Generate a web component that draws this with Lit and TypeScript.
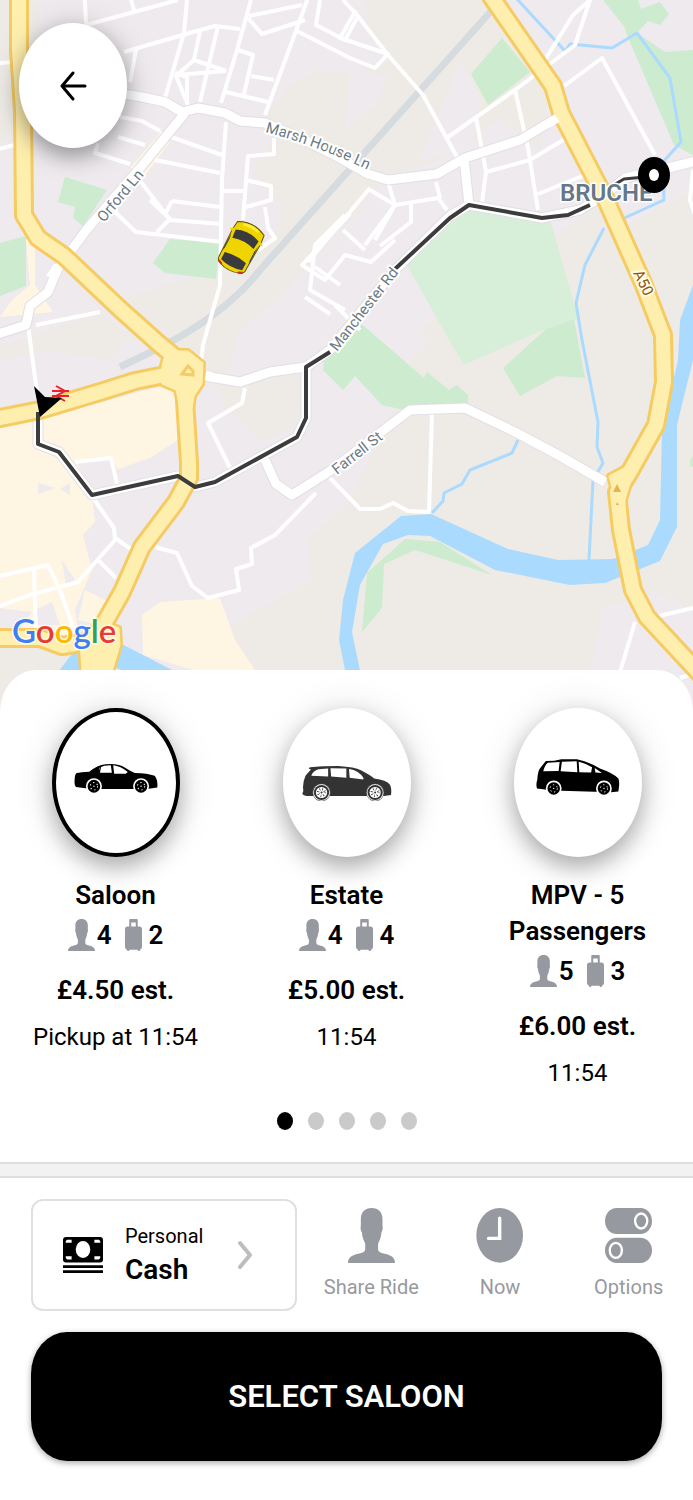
import { LitElement, html, svg, css } from "lit";
import { customElement, property, state } from "lit/decorators.js";
import { classMap } from "lit/directives/class-map.js";

type Vehicle = {
  id: string;
  name: string;
  seats: number;
  bags: number;
  price: string;
  eta: string;
};

const VEHICLES: Vehicle[] = [
  { id: "saloon", name: "Saloon", seats: 4, bags: 2, price: "£4.50 est.", eta: "Pickup at 11:54" },
  { id: "estate", name: "Estate", seats: 4, bags: 4, price: "£5.00 est.", eta: "11:54" },
  { id: "mpv", name: "MPV - 5 Passengers", seats: 5, bags: 3, price: "£6.00 est.", eta: "11:54" },
];

const wheel = (x: number, y: number) => svg`
  <circle cx=${x} cy=${y} r="24" fill="#fff"></circle>
  <circle cx=${x} cy=${y} r="19" fill="currentColor"></circle>
  <circle cx=${x} cy=${y} r="11" fill="none" stroke="#fff" stroke-width="3" stroke-dasharray="4 8"></circle>
  <circle cx=${x} cy=${y} r="2" fill="#fff"></circle>`;

const alloy = (x: number, y: number) => svg`
  <circle cx=${x} cy=${y} r="27" fill="#777"></circle>
  <circle cx=${x} cy=${y} r="25" fill="#fff"></circle>
  <circle cx=${x} cy=${y} r="23" fill="currentColor"></circle>
  <circle cx=${x} cy=${y} r="17" fill="#fff"></circle>
  <circle cx=${x} cy=${y} r="10" fill="none" stroke="currentColor" stroke-width="8" stroke-dasharray="2 6"></circle>
  <circle cx=${x} cy=${y} r="3" fill="currentColor"></circle>`;

const CARS: Record<string, unknown> = {
  saloon: html`<svg class="car saloon" viewBox="130 222 253 92" preserveAspectRatio="none" aria-hidden="true">
    <path fill="currentColor" d="M138 252Q150 249 176 248Q200 229 225 226Q262 222 284 236Q300 246 313 252Q352 253 373 260Q383 272 381 295L350 299H212L165 297L136 293Q130 288 132 272Q132 256 138 252Z"></path>
    <path fill="#fff" d="M206 236Q220 229 241 229L244 251H207Q203 244 206 236ZM248 229Q270 231 292 249L286 254H251Z"></path>
    <path fill="currentColor" d="M208 232h4l-4 20h-4z"></path>
    ${wheel(190, 291)}${wheel(332, 291)}
  </svg>`,
  estate: html`<svg class="car estate" viewBox="0 222 272 110" preserveAspectRatio="none" aria-hidden="true">
    <path fill="currentColor" d="M24 229Q60 225 110 225Q160 228 178 238Q205 252 218 263Q255 268 266 282Q272 295 269 314L248 317H22Q4 317 1 310Q6 302 3 290Q4 268 11 254L27 236L20 233Z"></path>
    <path fill="#fff" d="M28 255Q33 240 50 235L79 233V257ZM86 232L134 233V261L88 257ZM142 234Q172 238 186 262L185 266L144 261Z"></path>
    ${alloy(59, 306)}${alloy(221, 306)}
  </svg>`,
  mpv: html`<svg class="car mpv" viewBox="527 209 256 112" preserveAspectRatio="none" aria-hidden="true">
    <path fill="currentColor" d="M557 215L583 214L604 210H652Q690 218 722 238Q762 252 778 268Q783 280 778 307L755 310L605 305L560 302L530 298Q526 285 531 272Q532 245 540 236Z"></path>
    <path fill="#fff" d="M549 246Q554 226 563 220L599 218L596 245ZM606 217L651 216L653 249L602 246ZM657 217Q678 222 698 234L695 250L659 249ZM706 236L728 251L708 250Z"></path>
    ${wheel(581, 298)}${wheel(734, 298)}
  </svg>`,
};

const personIcon = html`<svg class="person" viewBox="0 0 139 161" preserveAspectRatio="none" aria-hidden="true">
  <path fill="currentColor" d="M70 0C50 0 38 13 38 32V52C36 58 38 68 41 71C42 86 47 95 51 105V120C51 130 40 132 26 135C9 140 0 147 0 161H139C139 147 130 140 113 135C99 132 89 130 89 120V105C93 95 98 86 99 71C102 68 104 58 102 52V32C102 13 90 0 70 0Z"></path>
</svg>`;

const bagIcon = html`<svg class="bag" viewBox="0 0 52 94" preserveAspectRatio="none" aria-hidden="true">
  <path fill="currentColor" fill-rule="evenodd" d="M16 0H36Q39 0 39 3V22H44Q52 22 52 30V82Q52 88 47 89V91Q45 94 42 94Q39 94 38 90H14Q13 94 10 94Q7 94 5 91V89Q0 88 0 82V30Q0 22 8 22H13V3Q13 0 16 0ZM19 10V22H33V10Z"></path>
</svg>`;

const clockIcon = html`<svg class="action-icon" viewBox="0 0 139 161" preserveAspectRatio="none" aria-hidden="true">
  <ellipse cx="70" cy="80" rx="69" ry="80" fill="currentColor"></ellipse>
  <path d="M70 30V89H37" fill="none" stroke="#fff" stroke-width="10" stroke-linecap="round"></path>
</svg>`;

const togglesIcon = html`<svg class="action-icon" viewBox="0 0 139 161" preserveAspectRatio="none" aria-hidden="true">
  <rect width="139" height="76" rx="34" ry="38" fill="currentColor"></rect>
  <rect y="87" width="139" height="74" rx="34" ry="37" fill="currentColor"></rect>
  <ellipse cx="107" cy="38" rx="18" ry="22" fill="none" stroke="#fff" stroke-width="7"></ellipse>
  <ellipse cx="32" cy="124" rx="18" ry="22" fill="none" stroke="#fff" stroke-width="7"></ellipse>
</svg>`;

const MAJOR = [
  "M19 -5L19 50L23 110L24 215L38 238L64 256L120 309L158 343L188 368",
  "M-5 419L40 410L100 392L135 381L190 370",
  "M187 371L185 400L189 463L189 478L176 502L142 547L122 592L105 622L98 650L96 690",
  "M-5 638L40 638L62 646L100 640",
  "M490 -5L553 86L561 113L606 200L643 283L663 335L664 382L656 425L628 475L617 492L621 530L633 590L647 617L700 674",
];

const MID = [
  "M110 92L142 97L165 102L182 112L198 108L225 113L240 121L265 123L300 138L340 158L368 174L388 180L437 174L465 158L520 140L557 118",
  "M185 113L140 168L88 228L58 268L48 292L30 306L26 325L-5 335",
  "M464 158L469 205L450 216L395 270L330 350L306 367L270 372L240 382L205 376",
  "M469 205L542 218L580 210L606 194L625 178L660 170L700 160",
  "M265 460L276 484L292 495L330 471L410 410L465 408L515 432L560 456L605 482",
  "M38 405V444L59 452L92 495L178 476L195 487L215 482L297 437L306 418V367",
];

const MINOR = [
  "M85 0L86 25L178 0M131 0L134 10M124 52L186 34L215 26L240 29M136 50L130 82M187 0L184 33L165 98M200 31L194 60L176 76L188 105M218 26L200 102M176 75L226 71",
  "M251 0L237 50L221 103M249 16L302 5M248 18L262 34L305 20M308 -2L265 115M238 50L253 55L244 94M226 92L268 102M251 76L274 80M295 30L350 58L375 68L388 54L340 38L356 10M320 0L316 25L345 40L357 18",
  "M194 60L226 71M175 73L187 77L187 104M120 117L142 121L160 131M118 137L145 145M98 143L95 153L130 164M160 133L222 155M155 160L220 173M138 178L170 220L222 224M150 200L170 219L157 232M172 201L220 207M172 201L165 214M115 212L136 232L222 242M226 122L222 180L220 285L203 345L199 378M222 191H243M274 138L274 154L248 156L243 220M246 180L271 186L271 200L246 207M265 207L268 228L275 238L258 250",
  "M36 325L100 312M28 325L38 400M-5 150L18 144M0 63L14 62",
  "M343 0L357 15L388 55L423 95L457 157M448 137L515 90L575 45L590 0L573 15L545 60M515 90L528 148L538 210M476 117L486 172L482 202M486 172L530 160L568 137M564 86L602 58L655 155M538 194L585 175M388 182L395 205L438 198L447 210M395 205L375 240M436 182L440 198",
  "M350 214L302 265L325 280L345 255L371 262L395 240M345 215L315 245L310 290L345 310M315 267L340 285M343 230L365 250M335 305L360 330M305 297L330 314M370 188L308 262M370 190L395 205L365 245M411 203V222L380 246",
  "M432 412L429 512L408 511L393 503L380 509L360 509L330 478M245 388L242 403L208 423L230 468M316 493L275 535L251 548L252 564L236 569L239 590L208 598L192 586L177 553L155 547",
  "M75 462L111 458L117 484M91 495L114 528L115 540L78 582L30 595L-5 608M115 538L135 552M99 561L116 578M-5 577L48 565L60 590L74 630M34 570L36 635M693 608L655 617M635 622L620 672M693 170L690 200L695 215M693 674L680 678",
];

const JUNCTIONS =
  "M162 366L166 351L181 351L188 351L203 363L202 384L194 396L192 408L180 408L176 390L162 384ZM609 476L633 463L631 480L625 500L624 524L617 505ZM80 640L100 620L119 628L120 645L112 672H82Z";

const mapArt = svg`
  <rect width="693" height="720" fill="#eeeaee"></rect>
  <g class="land">
    <path d="M0 0H40V62L28 70L20 130L0 140ZM365 0H492L550 86L540 150L500 120L440 160L385 178L350 220L305 270L260 320L215 390L190 362L130 340L110 300L205 275L270 245L283 205L252 172L272 140L265 115L290 85L318 70L352 72L388 62L368 30Z"></path>
    <path d="M0 345L45 332L100 312L128 336L110 360L40 350L0 362ZM220 385L300 372L297 425L262 442L222 405Z"></path>
    <path d="M425 325L570 225L600 205L650 290V720H140L215 635L310 580L308 540L350 500L395 405Z"></path>
    <path d="M600 240L693 190V610L650 590L600 605L585 672L560 700L400 680Z"></path>
    <path d="M0 670V650L90 640L150 680V720H0Z"></path>
  </g>
  <path class="urban" d="M350 70L388 75L375 105L345 130ZM460 60L480 100L470 150L420 160ZM240 330L290 290L330 320L310 360L230 365ZM400 330L430 340L410 360ZM602 608L650 596L693 615V720H583Z"></path>
  <g class="shop">
    <path d="M0 428L70 410L162 386L175 390L178 440L150 458L118 470L112 458L76 462L92 495L95 522L83 535L92 570L75 610L80 640H0ZM26 240H35V285L53 312L0 317L12 300L30 285ZM142 615L160 602L220 598L235 640L255 670L240 684L143 655Z"></path>
    <path d="M85 590L115 605L100 625L78 620ZM160 133L170 142L145 176L130 168Z"></path>
  </g>
  <path class="urban" d="M178 444V478L118 484L116 470L150 458ZM38 483L55 488L38 494ZM70 483V495L60 489ZM62 560L75 580L66 585ZM35 610L52 602L60 625H35ZM0 608L32 612L20 630H0Z"></path>
  <g class="park">
    <path d="M65 177L107 190L83 226L73 218L75 207L58 202ZM0 243L26 236V286L0 296ZM170 239L220 243L216 279L165 273L153 263ZM502 38L530 72L488 105L471 74ZM603 0H638L641 9L660 2L669 14L660 25L648 21L637 33L665 52L693 50V155L674 145L627 35L624 26ZM325 350L350 316L365 327L424 378L427 372L449 390L457 385L468 395V403L432 405L400 409L382 405L355 376L343 390L323 370ZM503 368L545 330L573 314L585 378L557 376L520 396ZM362 632L367 573L405 539L440 542L492 575L415 550L384 564L382 608ZM690 460V466L693 467V456Z"></path>
  </g>
  <path fill="#d7eed8" d="M407 265L469 207L535 220L551 223L578 318L538 332L464 365L448 338Z"></path>
  <g class="rail">
    <path d="M492 10L260 270Q225 315 155 350L120 367"></path>
  </g>
  <path class="water-fill" d="M339 640L343 600L355 553L401 516L431 514L508 549L558 560L613 559L648 545L660 520L662 430L678 360L680 320L693 285V360L677 425V527L660 561L605 583L570 585L495 570L430 536L408 535L383 544L360 585L352 632L362 680H347ZM58 672L75 650L110 638L172 670L178 684H150L100 660L75 684Z"></path>
  <path class="stream" d="M516 -2L565 51L570 44L612 48L637 33L670 78L681 142L663 162L664 200L620 220M604 228L585 265L576 303L582 340L598 422L597 447L603 463L593 480L589 560M518 440L512 453L470 470L462 484L444 493L443 501L432 513"></path>
  ${MINOR.map((d) => svg`<path class="minor" d=${d}></path>`)}
  ${MID.map((d) => svg`<path class="mid-case" d=${d}></path>`)}
  ${MID.map((d) => svg`<path class="mid" d=${d}></path>`)}
  ${MAJOR.map((d) => svg`<path class="major-case" d=${d}></path>`)}
  <path class="junction-case" d=${JUNCTIONS}></path>
  ${MAJOR.map((d) => svg`<path class="major" d=${d}></path>`)}
  <path class="junction" d=${JUNCTIONS}></path>
  <path class="mid" d="M50 278L58 266M206 375L215 378M596 477L605 482M548 124L557 118"></path>
  <path fill="#ffefaf" stroke="#f5cb62" stroke-width="3" d="M182 374L188 366L193 371V375Z"></path>
  <path fill="#e3b64d" d="M613 492L617 484L621 492ZM617 502L619 505H616Z"></path>
  <path class="route" d="M38 412V444L59 452L92 495L178 476L195 487L215 482L297 437L306 418V367L330 352M395 269L450 218L469 205L542 218L568 215L590 205"></path>
  <path class="route thin" d="M612 186L624 179L645 177"></path>

  <path id="marsh" fill="none" d="M265 132Q318 146 368 170L390 180"></path>
  <text class="street"><textPath href="#marsh">Marsh House Ln</textPath></text>
  <text class="street" transform="translate(104 223) rotate(-50)">Orford Ln</text>
  <text class="street" transform="translate(337 352) rotate(-52)">Manchester Rd</text>
  <text class="street" transform="translate(337 475) rotate(-38)">Farrell St</text>
  <text class="road-no" transform="translate(633 273) rotate(64)">A50</text>
  <text class="place" x="560" y="201">BRUCHE</text>

  <g stroke="#e8222e" stroke-width="2" fill="none">
    <path d="M52 391H69M52 396H69M56 386L65 391L56 396L65 401"></path>
  </g>
  <path d="M34 386L45 397L62 398L40 417Z"></path>
  <ellipse cx="654" cy="175" rx="16" ry="18"></ellipse>
  <ellipse cx="654" cy="175" rx="5" ry="6" fill="#fff"></ellipse>

  <g transform="translate(241 247) rotate(28)">
    <path fill="#f0d400" stroke="#5c5414" stroke-width="1" d="M-15 -21Q0 -29 15 -21L16 -12L15 16Q16 22 11 24Q0 28 -11 24Q-16 22 -15 16L-16 -12Z"></path>
    <path fill="#f2d500" d="M-19 -11L-15 -14V-10ZM19 -11L15 -14V-10Z"></path>
    <path fill="#3b3b3d" d="M-13 -13Q0 -19 13 -13L12 -4Q0 -8 -12 -4ZM-12 12Q0 9 12 12L12 20Q0 24 -12 20ZM-15 -8L-14 -2V8L-15 12ZM15 -8L14 -2V8L15 12Z"></path>
    <path fill="#ffec3b" d="M-9 -22Q0 -26 9 -22L8 -20Q0 -22 -8 -20Z"></path>
    <path fill="#d92b1c" d="M-13 21l4 2v2l-5 -2ZM13 21l-4 2v2l5 -2Z"></path>
  </g>

  <text class="google" x="12" y="643"><tspan fill="#3f80f0">G</tspan><tspan fill="#e63d33">o</tspan><tspan fill="#fabb05">o</tspan><tspan fill="#3f80f0">g</tspan><tspan fill="#30a352">l</tspan><tspan fill="#e63d33">e</tspan></text>
`;

@customElement("ride-map")
export class RideMap extends LitElement {
  static styles = css`
    :host { display: block; position: relative; }
    .canvas { display: block; width: 100%; height: auto; font-family: Roboto, sans-serif; }
    .land { fill: #eeebe6; }
    .urban { fill: #eeeaee; }
    .shop { fill: #fff5e3; }
    .park { fill: #ccebcf; }
    .rail path { fill: none; stroke: #d5dbde; stroke-width: 7; }
    .water-fill { fill: #abdaff; }
    .stream { fill: none; stroke: #abdaff; stroke-width: 3; stroke-linejoin: round; }
    .minor { fill: none; stroke: #fff; stroke-width: 4; stroke-linejoin: round; }
    .mid { fill: none; stroke: #fff; stroke-width: 9; stroke-linejoin: round; }
    .mid-case { fill: none; stroke: #e1dfe3; stroke-width: 11; stroke-linejoin: round; }
    .major-case { fill: none; stroke: #f5cb62; stroke-width: 20; stroke-linejoin: round; }
    .major { fill: none; stroke: #ffefaf; stroke-width: 14; stroke-linejoin: round; }
    .junction-case { fill: #f5cb62; stroke: #f5cb62; stroke-width: 6; stroke-linejoin: round; }
    .junction { fill: #ffefaf; stroke: #ffefaf; stroke-width: 1; }
    .route { fill: none; stroke: #3c3c3c; stroke-width: 4; stroke-linejoin: round; }
    .thin { stroke-width: 3; }
    .street { font-size: 15px; fill: #6c7a84; paint-order: stroke; stroke: #fff; stroke-width: 4; stroke-linejoin: round; }
    .road-no { font-size: 15px; fill: #8a5314; paint-order: stroke; stroke: #fffbe6; stroke-width: 4; }
    .place { font-size: 24px; font-weight: 600; fill: #65778a; paint-order: stroke; stroke: #fff; stroke-width: 3; }
    .google { font-family: Lato, sans-serif; font-size: 33px; font-weight: 600; paint-order: stroke; stroke: #fff; stroke-opacity: .7; stroke-width: 3; }
    .back {
      position: absolute; top: 23px; left: 19px; width: 108px; height: 125px;
      display: grid; place-items: center; padding: 0; border: 0; border-radius: 50%;
      background: #fff; color: #000; cursor: pointer;
      box-shadow: 0 8px 20px rgba(0, 0, 0, .3), 0 4px 36px rgba(0, 0, 0, .14);
    }
    .back svg { width: 28px; height: 32px; }
  `;

  render() {
    return html`
      <svg class="canvas" viewBox="0 0 693 712" role="img" aria-label="Route map">${mapArt}</svg>
      <button class="back" type="button" aria-label="Back">
        <svg viewBox="0 0 28 32" fill="none" stroke="currentColor" stroke-width="3" stroke-linecap="round" stroke-linejoin="round" aria-hidden="true">
          <path d="M26 16H3M14 3L3 16L14 29"></path>
        </svg>
      </button>`;
  }
}

@customElement("vehicle-option")
export class VehicleOption extends LitElement {
  static styles = css`
    :host { display: block; }
    .option {
      display: flex; flex-direction: column; align-items: center; width: 100%;
      padding: 0 32px; border: 0; background: none; color: #000; cursor: pointer;
      font-family: Roboto, sans-serif; text-align: center;
    }
    .disc {
      display: grid; place-items: center; box-sizing: border-box; width: 128px; height: 149px;
      margin-bottom: 20px; border: 4px solid #fff; border-radius: 50%; background: #fff;
      box-shadow: 0 10px 22px rgba(0, 0, 0, .28), 0 3px 40px rgba(0, 0, 0, .12);
    }
    .on .disc { border-color: #000; }
    .car { display: block; }
    .saloon { width: 84px; height: 31px; margin-bottom: 8px; }
    .estate { width: 90px; height: 36px; color: #333; }
    .mpv { width: 84px; height: 37px; margin-bottom: 10px; }
    .name { font-size: 26px; font-weight: 600; line-height: 36px; }
    .capacity { display: flex; align-items: center; height: 44px; font-size: 26px; font-weight: 600; }
    .person { width: 27px; height: 32px; margin-right: 2px; color: #9799a0; }
    .bag { width: 17px; height: 32px; margin: 0 7px 0 13px; color: #9799a0; }
    .price { margin-top: 17px; font-size: 26px; font-weight: 600; line-height: 32px; }
    .eta { margin-top: 16px; font-size: 24px; line-height: 30px; white-space: nowrap; }
  `;

  @property({ attribute: false }) vehicle!: Vehicle;
  @property({ type: Boolean }) selected = false;

  render() {
    const v = this.vehicle;
    return html`
      <button type="button" class=${classMap({ option: true, on: this.selected })} aria-pressed=${this.selected}>
        <span class="disc">${CARS[v.id]}</span>
        <span class="name">${v.name}</span>
        <span class="capacity">${personIcon}<span>${v.seats}</span>${bagIcon}<span>${v.bags}</span></span>
        <span class="price">${v.price}</span>
        <span class="eta">${v.eta}</span>
      </button>`;
  }
}

@customElement("app-root")
export class AppRoot extends LitElement {
  static styles = css`
    :host { display: block; min-height: 100vh; background: #fff; color: #000; font-family: Roboto, sans-serif; }
    button { font-family: inherit; cursor: pointer; }
    .sheet { position: relative; margin-top: -42px; padding-top: 38px; border-radius: 36px 36px 0 0 / 42px 42px 0 0; background: #fff; }
    .vehicles { display: grid; grid-template-columns: repeat(3, 1fr); margin: 0; padding: 0; list-style: none; }
    .dots { display: flex; justify-content: center; gap: 15px; padding: 24px 0 32px; }
    .dot { width: 16px; height: 18px; padding: 0; border: 0; border-radius: 50%; background: #cacaca; }
    .dot.active { background: #000; }
    .divider { height: 12px; border: solid #dedede; border-width: 2px 0; background: #f2f2f2; }
    .controls { display: grid; grid-template-columns: 276px repeat(3, minmax(0, 1fr)); padding: 21px 0 0 31px; }
    .payment {
      display: flex; align-items: center; box-sizing: border-box; height: 112px; margin-right: 10px; padding: 0 42px 0 30px;
      border: 2px solid #e0e0e0; border-radius: 12px; background: #fff; color: #000; text-align: left;
    }
    .cash { width: 40px; height: 36px; margin-right: 22px; }
    .pay-text { display: flex; flex-direction: column; flex: 1; }
    .pay-kind { font-size: 20px; line-height: 30px; }
    .pay-name { font-size: 28px; font-weight: 600; line-height: 38px; }
    .chevron { width: 16px; height: 30px; }
    .action {
      display: flex; flex-direction: column; align-items: center; gap: 9px; padding: 9px 0 0;
      border: 0; background: none; color: #9799a0; font-size: 20px; line-height: 30px; white-space: nowrap;
    }
    .action .person, .action-icon { width: 47px; height: 55px; }
    .actions { display: contents; }
    .confirm-bar { padding: 21px 31px 40px; }
    .confirm {
      display: block; width: 100%; height: 129px; padding: 0; border: 0; border-radius: 36px / 42px;
      background: #000; color: #fff; font-size: 31px; font-weight: 600; text-transform: uppercase;
      box-shadow: 0 2px 6px rgba(0, 0, 0, .35);
    }
  `;

  @state() private selected = "saloon";

  render() {
    const current = VEHICLES.find((v) => v.id === this.selected)!;
    return html`
      <ride-map></ride-map>
      <main class="sheet">
        <ul class="vehicles">
          ${VEHICLES.map(
            (v) => html`<li>
              <vehicle-option .vehicle=${v} ?selected=${v.id === this.selected} @click=${() => (this.selected = v.id)}></vehicle-option>
            </li>`
          )}
        </ul>
        <nav class="dots" aria-label="Vehicle pages">
          ${[1, 2, 3, 4, 5].map(
            (n) => html`<button type="button" class=${classMap({ dot: true, active: n === 1 })} aria-label=${`Page ${n}`}></button>`
          )}
        </nav>
        <div class="divider"></div>
        <div class="controls">
          <button class="payment" type="button">
            <svg class="cash" viewBox="0 0 116 106" preserveAspectRatio="none" aria-hidden="true">
              <rect width="116" height="75" rx="9"></rect>
              <ellipse cx="58" cy="37" rx="21" ry="25" fill="#fff"></ellipse>
              <path fill="#fff" d="M12 8H25V17H8V12ZM91 8H104L108 12V17H91ZM8 57H25V66H12L8 62ZM91 57H108V62L104 66H91Z"></path>
              <path d="M0 83H116V91H0ZM0 98H116V106H0Z"></path>
            </svg>
            <span class="pay-text">
              <span class="pay-kind">Personal</span>
              <span class="pay-name">Cash</span>
            </span>
            <svg class="chevron" viewBox="0 0 16 30" fill="none" stroke="#bdbdbd" stroke-width="4" stroke-linecap="round" stroke-linejoin="round" aria-hidden="true">
              <path d="M3 3L13 15L3 27"></path>
            </svg>
          </button>
          <div class="actions">
            <button class="action" type="button">${personIcon}<span>Share Ride</span></button>
            <button class="action" type="button">${clockIcon}<span>Now</span></button>
            <button class="action" type="button">${togglesIcon}<span>Options</span></button>
          </div>
        </div>
        <div class="confirm-bar">
          <button class="confirm" type="button">Select ${current.name}</button>
        </div>
      </main>`;
  }
}
